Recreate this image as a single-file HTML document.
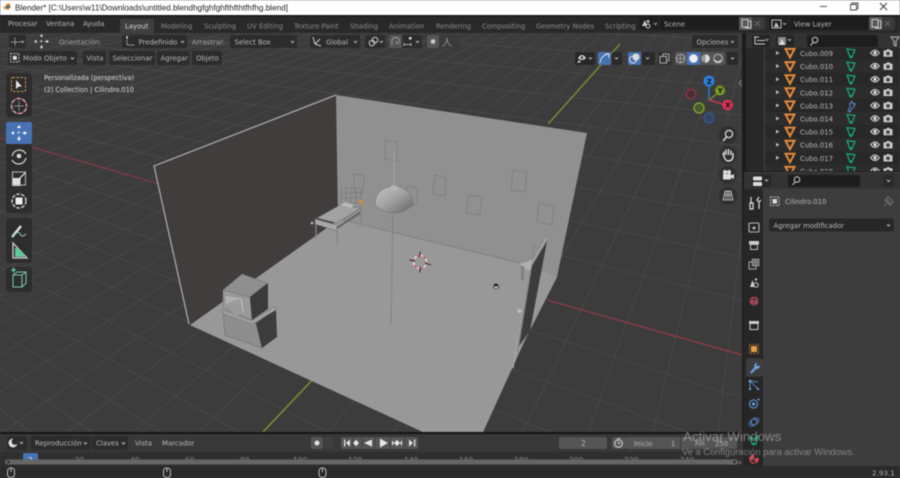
<!DOCTYPE html>
<html><head><meta charset="utf-8"><style>
html,body{margin:0;padding:0;background:#3d3d3d;width:900px;height:478px;overflow:hidden}
#root{position:absolute;left:0;top:0;width:900px;height:478px;overflow:hidden;contain:paint}
svg{display:block;filter:blur(.55px)}
text{font-family:"DejaVu Sans","Liberation Sans",sans-serif;font-size:6.9px;fill:#b8b8b8}
.t{fill:#8a8a8a}
.w{font-family:"Liberation Sans",sans-serif}
</style></head><body><div id="root">
<svg width="900" height="478" viewBox="0 0 900 478" xmlns="http://www.w3.org/2000/svg">
<defs>
<clipPath id="vp"><rect x="0" y="33" width="742" height="400"/></clipPath>
<clipPath id="ol"><rect x="746" y="48" width="154" height="123"/></clipPath>
<clipPath id="tabs"><rect x="118" y="18" width="517" height="15"/></clipPath>
<clipPath id="scrub"><rect x="0" y="451" width="742" height="10"/></clipPath>
<linearGradient id="dome" x1="0" y1="0" x2="1" y2="1"><stop offset="0" stop-color="#c4c4c4"/><stop offset=".5" stop-color="#a0a0a0"/><stop offset="1" stop-color="#626262"/></linearGradient>
<symbol id="tri" viewBox="0 0 12 12" overflow="visible"><path d="M1.5 2H10.5L6 10.5Z" fill="none" stroke="#e48a3a" stroke-width="2"/></symbol>
<symbol id="gm" viewBox="0 0 12 12" overflow="visible"><path d="M2 2L10 3L7 10L5 10Z" fill="none" stroke="#17a67a" stroke-width="1.3"/><circle cx="6" cy="10" r="1.4" fill="#17a67a"/></symbol>
<symbol id="eye" viewBox="0 0 10 8" overflow="visible"><path d="M.7 4Q5-1.5 9.3 4Q5 9.5 .7 4Z" fill="none" stroke="#ddd" stroke-width="1"/><circle cx="5" cy="4" r="1.7" fill="#ddd"/></symbol>
<symbol id="cam" viewBox="0 0 10 8" overflow="visible"><path d="M.5 1.5H3L4 .3H6.5L7.5 1.5H9.5V7.7H.5Z" fill="#ccc"/><circle cx="5" cy="4.5" r="1.9" fill="#444"/></symbol>
</defs>

<!-- title bar -->
<rect width="900" height="15" fill="#fff"/>
<path d="M3 8L6 5L8 3L10 4L11 7L8 10L5 9Z" fill="#e8872b"/><circle cx="8" cy="7" r="1.6" fill="#2c6fb0"/>
<text class="w" x="15" y="10.5" style="font-size:8.6px;fill:#222" textLength="273" lengthAdjust="spacingAndGlyphs">Blender* [C:\Users\w11\Downloads\untitled.blendhgfghfghfthfthtfhfhg.blend]</text>
<path d="M820 6.5H827" stroke="#555" stroke-width="1"/>
<path d="M850.5 4.5H856.5V10H850.5ZM852 4.5V3H858V8.5H856.5" fill="none" stroke="#444" stroke-width=".9"/>
<path d="M880 3L887 10M887 3L880 10" stroke="#333" stroke-width=".9"/>

<!-- top bar -->
<rect y="15" width="900" height="18" fill="#292929"/>
<rect y="15" width="900" height="1.500" fill="#161616"/>
<text x="8" y="26">Procesar</text><text x="46" y="26">Ventana</text><text x="83" y="26">Ayuda</text>
<rect x="120" y="19" width="34" height="14" rx="1.500" fill="#3f3f3f"/>
<g clip-path="url(#tabs)">
<text x="125" y="28.500" style="fill:#d8d8d8">Layout</text>
<text class="t" x="161" y="28.500">Modeling</text>
<text class="t" x="204" y="28.500">Sculpting</text>
<text class="t" x="247" y="28.500">UV Editing</text>
<text class="t" x="294" y="28.500">Texture Paint</text>
<text class="t" x="350" y="28.500">Shading</text>
<text class="t" x="389" y="28.500">Animation</text>
<text class="t" x="436" y="28.500">Rendering</text>
<text class="t" x="482" y="28.500">Compositing</text>
<text class="t" x="536" y="28.500">Geometry Nodes</text>
<text class="t" x="605" y="28.500">Scripting</text>
</g>
<rect x="639" y="17" width="20" height="13" rx="2" fill="#1f1f1f"/>
<path d="M642 26L645 20L647 26ZM648 20a1.400 1.400 0 1 0 .1 0" fill="#ccc"/><circle cx="648" cy="26" r="2" fill="none" stroke="#ccc"/>
<path d="M654 23l1.500 1.500L657 23" fill="none" stroke="#aaa"/>
<rect x="660" y="17" width="79" height="13" fill="#1d1d1d"/>
<text x="664" y="26.500">Scene</text>
<rect x="739" y="17" width="26" height="13" rx="2" fill="#3a3a3a"/>
<rect x="739" y="17" width="13" height="13" fill="#585858"/>
<path d="M742 19.500H748V27H742ZM749 21H751V28H745" fill="none" stroke="#ccc" stroke-width="1"/>
<path d="M755 21L760 26M760 21L755 26" stroke="#6a6a6a"/>
<rect x="769" y="17" width="20" height="13" rx="2" fill="#1f1f1f"/>
<rect x="772" y="20" width="9" height="8" fill="none" stroke="#bbb"/><path d="M774 27L776 22L779 27Z" fill="#ccc"/>
<path d="M783 23l1.500 1.500L786 23" fill="none" stroke="#aaa"/>
<rect x="790" y="17" width="79" height="13" fill="#1d1d1d"/>
<text x="794" y="26.500">View Layer</text>
<rect x="869" y="17" width="26" height="13" rx="2" fill="#3a3a3a"/>
<rect x="869" y="17" width="13" height="13" fill="#585858"/>
<path d="M872 19.500H878V27H872ZM879 21H881V28H875" fill="none" stroke="#ccc" stroke-width="1"/>
<path d="M885 21L890 26M890 21L885 26" stroke="#6a6a6a"/>

<!-- viewport -->
<rect x="0" y="33" width="742" height="400" fill="#3c3c3c"/>
<g clip-path="url(#vp)">
<path stroke="#4a4a4a" stroke-width=".8" fill="none" d="M-578-24L742 20M-578-24L742 40M-578-24L742 62M-578-24L742 87M-578-24L742 115M-578-24L742 146M-578-24L742 180M-578-24L742 217M-578-24L742 257M-578-24L742 300M-578-24L742 398M-578-24L687 432M-578-24L549 432M-578-24L432 432M-578-24L329 432M-578-24L240 432M-578-24L162 432M-578-24L92 432M-578-24L31 432M-578-24L-23 432M-578-24L-74 432M-578-24L-120 432M-578-24L-161 432"/>
<path stroke="#4a4a4a" stroke-width=".8" fill="none" d="M784-120L718 432M784-120L653 432M784-120L588 432M784-120L523 432M784-120L458 432M784-120L393 432M784-120L328 432M784-120L198 432M784-120L133 432M784-120L68 432M784-120L3 432M784-120L-62 432M784-120L-127 432M784-120L-192 432M784-120L-257 432M784-120L-322 432M784-120L-387 432M784-120L-452 432M784-120L-517 432M784-120L-582 432M784-120L-647 432M784-120L-712 432M784-120L-777 432M784-120L-842 432M784-120L-907 432M784-120L-972 432M784-120L-1037 432M784-120L-1102 432M784-120L-1167 432M784-120L-1232 432M784-120L-1362 432M784-120L-1492 432M784-120L-1622 432M784-120L-1752 432M784-120L-1882 432M784-120L-2012 432"/>
<path d="M0 138L160 184" stroke="#8a3a48" stroke-width="1.100"/>
<path d="M547 300L742 355" stroke="#a03a4a" stroke-width="1.100"/>
<path d="M263 432L316 376M548 124L600 66L620 44" stroke="#7c9e32" stroke-width="1.300"/>

<!-- room -->
<polygon points="336,95 587,133 557,277 525,340 483,432 423,432 190,325 337,218" fill="#909090"/>
<polygon points="337,218 520,263 557,277 525,340 483,432 423,432 190,325" fill="#989898"/>
<polygon points="155,167 336,96 338,220 190,325" fill="#413d3d"/>
<path d="M189 324L154 166L336 95" fill="none" stroke="#a8a8a8" stroke-width="1.300"/>
<path d="M338 219L520 263" stroke="#7c7c7c" stroke-width=".8"/>
<g fill="none" stroke="#7a7a7a" stroke-width=".7">
<polygon points="513,170 527,172 525,192 511,190"/>
<polygon points="468,195 482,197 480,215 467,213"/>
<polygon points="539,203 554,206 552,225 537,222"/>
<polygon points="435,175 446,178 445,196 433,194"/>
<polygon points="385,140 397,142 397,161 385,159"/>
<polygon points="354,174 364,175 363,193 354,192"/>
<polygon points="407,186 418,188 416,205 406,203"/>
</g>
<!-- door -->
<path d="M534 247L541 248L540 262L533 262Z" fill="none" stroke="#7e7e7e" stroke-width=".7"/>
<polygon points="547,241 532,266 519,346 530,331" fill="#3c3c3c"/>
<path d="M547 238L531 264L513 368" fill="none" stroke="#a6a6a6" stroke-width="1.300"/>
<path d="M530 270L517 352" stroke="#777" stroke-width=".7"/>
<polygon points="520,264 532,260 529,271" fill="#b0b0b0"/>
<rect x="521" y="266" width="3" height="14" fill="#828282"/>
<circle cx="519.500" cy="311" r="2" fill="#bebebe"/>
<!-- lamp -->
<path d="M393 213L391 325" stroke="#7c7c7c" stroke-width=".8"/>
<path d="M394 153V186" stroke="#a0a0a0" stroke-width="1.400"/>
<path d="M375 205Q375 188 394 186Q413 188 413 205Q394 221 375 205Z" fill="url(#dome)" stroke="#6e6e6e" stroke-width=".5"/>
<ellipse cx="394" cy="188" rx="4" ry="2.600" fill="#b5b5b5"/>
<!-- bed -->
<g stroke="#767676" stroke-width=".6" fill="none"><path d="M341 188H361V203H341ZM346 188V203M351 188V203M356 188V203M341 193H361M341 198H361"/></g>
<polygon points="317,218 340,205 361,208 337,223" fill="#a2a2a2" stroke="#6a6a6a" stroke-width=".6"/>
<polygon points="340,205 345,202 354,205 351,208" fill="#b8b8b8"/>
<polygon points="315,219 337,225 337,231 315,224" fill="#a8a8a8" stroke="#6c6c6c" stroke-width=".6"/>
<path d="M337 228L361 212" stroke="#5e5e5e" stroke-width="1.800"/>
<path d="M316 223V239M337 231V246M361 205V227" stroke="#858585" stroke-width="1.300"/>
<circle cx="312" cy="223" r="1.300" fill="#bbb"/>
<rect x="359.500" y="200.500" width="3" height="3" fill="#f08a1a"/>
<!-- furniture -->
<polygon points="223,312 256,323 262,348 225,335" fill="#8e8e8e" stroke="#6d6d6d" stroke-width=".6"/>
<polygon points="256,323 276,309 277,337 262,348" fill="#3d3b3b"/>
<polygon points="222,310 252,321 275,307 276,310 252,324 222,313" fill="#a4a4a4" stroke="#6d6d6d" stroke-width=".5"/>
<polygon points="223,290 250,297 252,320 223,308" fill="#9a9a9a" stroke="#6d6d6d" stroke-width=".5"/>
<polygon points="223,290 242,274 267,283 250,297" fill="#8f8f8f" stroke="#6d6d6d" stroke-width=".5"/>
<polygon points="250,297 268,283 268,309 252,320" fill="#3b3939"/>
<polygon points="225,295 243,298 245,314 235,316 225,304" fill="#b0b0b0" stroke="#7d7d7d" stroke-width=".5"/>
<polygon points="225,304 240,299 243,314 235,316" fill="#9a9a9a"/>
<!-- 3d cursor -->
<circle cx="420" cy="262" r="6.500" fill="none" stroke="#e8e8e8" stroke-width="1.300"/>
<circle cx="420" cy="262" r="6.500" fill="none" stroke="#d2404a" stroke-width="1.300" stroke-dasharray="3 3.800"/>
<path d="M420 251.500V257M420 267V272.500M409.500 260L415 261M425 263L431 265" stroke="#222" stroke-width=".9"/>
<!-- origin -->
<path d="M493.500 288Q493 283.500 496 283.500Q499 284 499 288Z" fill="#222"/><rect x="494" y="286" width="4.500" height="2.500" fill="#bbb" stroke="#222" stroke-width=".5"/>
</g>

<!-- tool settings row -->
<rect x="9" y="35" width="17" height="13" rx="2" fill="#2c2c2c"/>
<path d="M11 42H20M15 38V46" stroke="#ccc" stroke-width="1" stroke-dasharray="1.500 1"/>
<path d="M21 41l1.500 1.500L24 41" fill="none" stroke="#bbb"/>
<path d="M41.500 35V48M35 41.500H48" stroke="#ccc" stroke-width="1" stroke-dasharray="2 3"/><path d="M41.500 34L39.800 36.500H43.200ZM41.500 49L39.800 46.500H43.200ZM34 41.500L36.500 39.800V43.200ZM49 41.500L46.500 39.800V43.200Z" fill="#ddd"/>
<text x="59" y="44.500" style="fill:#a5a5a5">Orientación:</text>
<rect x="122" y="35" width="65" height="13" rx="2" fill="#2c2c2c"/>
<path d="M127 38V45H134" fill="none" stroke="#ccc" stroke-dasharray="1.500 1"/><circle cx="127" cy="37" r="1" fill="#ddd"/>
<text x="138.500" y="44.500">Predefinido</text>
<path d="M181 41l1.500 1.500L184 41" fill="none" stroke="#bbb"/>
<text x="192" y="44.500" style="fill:#a5a5a5">Arrastrar:</text>
<rect x="230" y="35" width="67" height="13" rx="2" fill="#2c2c2c"/>
<text x="234.500" y="44.500">Select Box</text>
<path d="M291 41l1.500 1.500L294 41" fill="none" stroke="#bbb"/>
<rect x="310" y="35" width="50" height="13" rx="2" fill="#2c2c2c"/>
<path d="M313 37L315 44L321 46M315 44L320 39" fill="none" stroke="#ccc"/>
<text x="326" y="44.500">Global</text>
<path d="M354 41l1.500 1.500L357 41" fill="none" stroke="#bbb"/>
<rect x="365" y="35" width="20" height="13" rx="2" fill="#2c2c2c"/>
<circle cx="372" cy="43" r="2.800" fill="none" stroke="#ccc"/><circle cx="375" cy="40" r="2.800" fill="none" stroke="#ccc"/>
<path d="M380 41l1.500 1.500L383 41" fill="none" stroke="#bbb"/>
<rect x="389" y="35" width="13" height="13" rx="2" fill="#555"/>
<rect x="402" y="35" width="20" height="13" rx="2" fill="#2c2c2c"/>
<path d="M392 45Q391 37 396 37.500Q400 38 399 42Q397 46 396 41" fill="none" stroke="#999"/>
<path d="M404 43V46M411 43V46M404 44.500H411" stroke="#ccc" stroke-width=".8"/><rect x="409" y="37" width="2.500" height="2.500" fill="#ddd"/>
<path d="M416 41l1.500 1.500L419 41" fill="none" stroke="#bbb"/>
<rect x="427" y="35" width="12" height="13" rx="2" fill="#555"/><circle cx="433" cy="41.500" r="2.500" fill="#ccc" stroke="#777"/>
<rect x="439" y="35" width="21" height="13" rx="2" fill="#3a3a3a"/>
<path d="M442 46Q446 46 447 38Q448 46 452 46" fill="none" stroke="#888"/>
<rect x="692" y="35" width="46" height="13" rx="2" fill="#2c2c2c"/>
<text x="696.500" y="44.500">Opciones</text>
<path d="M731 41l1.500 1.500L734 41" fill="none" stroke="#bbb"/>

<!-- header row -->
<rect x="8" y="51" width="69" height="14" rx="2" fill="#2c2c2c"/>
<rect x="10.500" y="53.500" width="8.500" height="8.500" fill="none" stroke="#bbb" stroke-dasharray="2 1"/><rect x="12.800" y="55.800" width="4" height="4" fill="#ddd"/>
<text x="23" y="60.500">Modo Objeto</text>
<path d="M71 57.500l1.500 1.500L74 57.500" fill="none" stroke="#bbb"/>
<rect x="83" y="51" width="23" height="14" rx="2" fill="#2c2c2c"/><text x="86.500" y="60.500">Vista</text>
<rect x="109" y="51" width="46" height="14" rx="2" fill="#2c2c2c"/><text x="112.500" y="60.500">Seleccionar</text>
<rect x="157" y="51" width="32" height="14" rx="2" fill="#2c2c2c"/><text x="160.500" y="60.500">Agregar</text>
<rect x="192" y="51" width="30" height="14" rx="2" fill="#2c2c2c"/><text x="196" y="60.500">Objeto</text>
<rect x="575" y="52" width="20" height="13" rx="2" fill="#272727"/>
<path d="M578 58Q582 52 586 58Q582 62 578 58Z" fill="#ddd"/><circle cx="582" cy="57.500" r="1.300" fill="#333"/><path d="M577 63L579 60L581 62Z" fill="#ddd"/>
<path d="M589 57.500l1.500 1.500L592 57.500" fill="none" stroke="#bbb"/>
<rect x="598" y="52" width="13" height="13" rx="1.500" fill="#4772b3"/>
<path d="M600 63Q601 55 609 54M605 54H609V58" fill="none" stroke="#ddd"/>
<rect x="612" y="52" width="10" height="13" rx="1.500" fill="#2a2a2a"/><path d="M615 57.500l1.500 1.500L618 57.500" fill="none" stroke="#bbb"/>
<rect x="628" y="52" width="13" height="13" rx="1.500" fill="#4772b3"/>
<circle cx="633" cy="59.500" r="3.500" fill="none" stroke="#ddd"/><circle cx="636" cy="57" r="3.500" fill="#ddd"/>
<rect x="642" y="52" width="13" height="13" rx="1.500" fill="#2a2a2a"/><path d="M646 57.500l1.500 1.500L649 57.500" fill="none" stroke="#bbb"/>
<rect x="658" y="52" width="13" height="13" rx="1.500" fill="#303030"/>
<path d="M660 56.500H666.500V63H660ZM663 56V54H669V60.500H667" fill="none" stroke="#aaa"/>
<rect x="675" y="52" width="50" height="13" rx="2" fill="#555"/>
<rect x="687" y="52" width="13" height="13" fill="#4772b3"/>
<circle cx="680.500" cy="58.500" r="4.300" fill="none" stroke="#aaa"/><path d="M676.500 58.500H684.500M680.500 54.500V62.500" stroke="#aaa" stroke-width=".7"/>
<circle cx="693.500" cy="58.500" r="4.300" fill="#eee"/>
<circle cx="705.500" cy="58.500" r="4.300" fill="#999"/><path d="M705.500 54.200A4.300 4.300 0 0 1 705.500 62.800Z" fill="#ddd"/>
<circle cx="718" cy="58.500" r="4.300" fill="none" stroke="#bbb"/><path d="M715 60A3.500 3.500 0 0 0 721 60" stroke="#ddd" fill="none"/>
<rect x="727" y="52" width="11" height="13" rx="1.500" fill="#2a2a2a"/><path d="M731 57.500l1.500 1.500L734 57.500" fill="none" stroke="#bbb"/>

<!-- toolbar -->
<rect x="6" y="73" width="26" height="44" rx="3" fill="#2d2d2d"/>
<rect x="6" y="122" width="26" height="22" rx="2" fill="#4772b3"/>
<rect x="6" y="144" width="26" height="69" rx="2" fill="#2d2d2d"/>
<rect x="6" y="218" width="26" height="45" rx="3" fill="#2d2d2d"/>
<rect x="6" y="267" width="26" height="25" rx="3" fill="#2d2d2d"/>
<rect x="11.500" y="77.500" width="14" height="14" rx="1" fill="none" stroke="#d19a4a" stroke-dasharray="2.500 1.500"/>
<path d="M16 80V89L19 86.500H22Z" fill="#e8e8e8"/>
<circle cx="19" cy="106" r="7.500" fill="none" stroke="#cfcfcf" stroke-width="1.300"/><circle cx="19" cy="106" r="7.500" fill="none" stroke="#c04050" stroke-width="1.300" stroke-dasharray="3 3"/><path d="M19 101V111M14 106H24" stroke="#888"/>
<path d="M19 126V140M12 133H26" stroke="#e8e8e8" stroke-dasharray="2 3"/><path d="M19 125L17 128H21ZM19 141L17 138H21ZM11 133L14 131V135ZM27 133L24 131V135Z" fill="#fff"/>
<path d="M12 156A7.500 7.500 0 0 1 26 154M26 158A7.500 7.500 0 0 1 12 160" fill="none" stroke="#d8d8d8" stroke-width="1.200"/><circle cx="19" cy="156" r="2.300" fill="#ddd"/>
<rect x="12.500" y="178" width="8" height="8" fill="#ddd"/><rect x="12.500" y="172" width="13" height="13" fill="none" stroke="#bbb"/><path d="M19 179L25 173" stroke="#fff"/>
<circle cx="19" cy="201" r="7" fill="none" stroke="#ddd" stroke-width="1.300" stroke-dasharray="3.500 1.500"/><rect x="15.500" y="197.500" width="7" height="7" fill="#eee"/>
<path d="M12 237L21 226" stroke="#e0e0e0" stroke-width="2.500"/><path d="M12 236Q19 230 20 234Q22 238 26 234" fill="none" stroke="#8fd5b0" stroke-width=".9"/>
<path d="M13 243V258H27L13 243Z" fill="none" stroke="#ccc" stroke-width="1.300"/><path d="M15 248A9 9 0 0 1 24 257H15Z" fill="#5fc79a"/>
<path d="M13 275L17 272H26V283L22 287H13ZM13 275H22V287M22 275L26 272" fill="none" stroke="#7fc8ac"/><path d="M11 270H16M13.500 267.500V272.500" stroke="#5fd6a5" stroke-width="1.200"/>

<!-- viewport text -->
<text x="44" y="80" style="fill:#dcdcdc" textLength="90" lengthAdjust="spacingAndGlyphs">Personalizada (perspectiva)</text>
<text x="44" y="92" style="fill:#dcdcdc" textLength="90" lengthAdjust="spacingAndGlyphs">(2) Collection | Cilindro.010</text>

<!-- gizmo -->
<path d="M709 100V86" stroke="#2a80e0" stroke-width="1.200"/><path d="M709 100L718 93" stroke="#7a9a20" stroke-width="1.200"/><path d="M709 100L722 104" stroke="#e03050" stroke-width="1.200"/>
<circle cx="691" cy="94" r="4.800" fill="#4a3036" stroke="#a03448" stroke-width="1"/>
<circle cx="699" cy="108" r="5" fill="#4c5a30" stroke="#82a82a" stroke-width="1.200"/>
<circle cx="709" cy="118" r="5" fill="#35455e" stroke="#2f629f" stroke-width="1"/>
<circle cx="709" cy="81" r="5.500" fill="#2a80e0"/><text x="706.800" y="84" style="fill:#111;font-weight:bold;font-size:7px">Z</text>
<circle cx="720" cy="90.500" r="5" fill="#789a20"/><text x="717.800" y="93" style="fill:#111;font-weight:bold;font-size:7px">Y</text>
<circle cx="727.500" cy="105" r="5.300" fill="#e03050"/><text x="725.200" y="107.500" style="fill:#111;font-weight:bold;font-size:7px">X</text>
<path d="M742 80L739 83L742 86" fill="none" stroke="#888"/>
<circle cx="728" cy="135" r="9" fill="#2f2f2f"/>
<circle cx="729" cy="134" r="3.600" fill="none" stroke="#ddd" stroke-width="1.200"/><path d="M726.500 137L723 141" stroke="#ddd" stroke-width="1.500"/>
<circle cx="728" cy="155" r="9" fill="#2f2f2f"/>
<path d="M724 155V151.500M726 155V149.500M728.500 155V149M731 155V150.500M733 157V153M724 155L723 153.500Q725 161 728 161Q733 161 733 156" fill="none" stroke="#e0e0e0" stroke-width="1.400"/>
<circle cx="728" cy="175" r="9" fill="#2f2f2f"/>
<rect x="723" y="174" width="8" height="5.500" fill="#ddd"/><circle cx="725" cy="172" r="2" fill="#ddd"/><circle cx="729" cy="172" r="2" fill="#ddd"/><path d="M731 175.500L734 174V179L731 177.500Z" fill="#ddd"/>
<circle cx="728" cy="196" r="9" fill="#2f2f2f"/>
<path d="M725 191H731L733 200H723ZM724 195H732M728 191V200M726.500 191L725.500 200M729.500 191L730.500 200" fill="none" stroke="#ccc" stroke-width=".8"/>

<!-- separators -->
<rect x="742" y="33" width="4" height="433" fill="#1c1c1c"/>
<rect y="432" width="746" height="2" fill="#151515"/>

<!-- outliner -->
<rect x="746" y="33" width="154" height="139" fill="#282828"/>
<rect x="746" y="33" width="154" height="15" fill="#333"/>
<rect x="752" y="35" width="18" height="12" rx="2" fill="#252525"/>
<path d="M754 37H759M757 40.500H765M757 44H765M755 37V44H757" fill="none" stroke="#ccc"/>
<path d="M765.500 39l1.500 1.500L768.500 39" fill="none" stroke="#aaa"/>
<rect x="776" y="35" width="18" height="12" rx="2" fill="#252525"/>
<rect x="778" y="37" width="8" height="8" fill="#888"/><path d="M779 45L782 39L785 45Z" fill="#ddd"/>
<path d="M788 39l1.500 1.500L791 39" fill="none" stroke="#aaa"/>
<rect x="807" y="35" width="71" height="12" rx="2" fill="#1d1d1d"/>
<circle cx="815" cy="40" r="2.800" fill="none" stroke="#ccc"/><path d="M813 42.500L810.500 45.500" stroke="#ccc"/>
<path d="M891 37H899L896 41V46L894 45V41Z" fill="none" stroke="#bbb"/>
<g clip-path="url(#ol)">
<rect x="765" y="59.500" width="135" height="13.100" fill="#2c2c2c"/>
<rect x="765" y="85.700" width="135" height="13.100" fill="#2c2c2c"/>
<rect x="765" y="111.900" width="135" height="13.100" fill="#2c2c2c"/>
<rect x="765" y="138.100" width="135" height="13.100" fill="#2c2c2c"/>
<rect x="765" y="164.300" width="135" height="13.100" fill="#2c2c2c"/>
<rect x="764" y="48" width="1" height="125" fill="#444"/>
<g fill="#bbb">
<path d="M776 51V55L779.500 53Z"/><path d="M776 64.100V68.100L779.500 66.100Z"/><path d="M776 77.200V81.200L779.500 79.200Z"/><path d="M776 90.300V94.300L779.500 92.300Z"/><path d="M776 103.400V107.400L779.500 105.400Z"/><path d="M776 116.500V120.500L779.500 118.500Z"/><path d="M776 129.600V133.600L779.500 131.600Z"/><path d="M776 142.700V146.700L779.500 144.700Z"/><path d="M776 155.800V159.800L779.500 157.800Z"/>
</g>
<use href="#tri" x="784" y="47" width="12" height="12"/><use href="#tri" x="784" y="60.100" width="12" height="12"/><use href="#tri" x="784" y="73.200" width="12" height="12"/><use href="#tri" x="784" y="86.300" width="12" height="12"/><use href="#tri" x="784" y="99.400" width="12" height="12"/><use href="#tri" x="784" y="112.500" width="12" height="12"/><use href="#tri" x="784" y="125.600" width="12" height="12"/><use href="#tri" x="784" y="138.700" width="12" height="12"/><use href="#tri" x="784" y="151.800" width="12" height="12"/><use href="#tri" x="784" y="164.900" width="12" height="12"/>
<text x="800" y="56">Cubo.009</text><text x="800" y="69.100">Cubo.010</text><text x="800" y="82.200">Cubo.011</text><text x="800" y="95.300">Cubo.012</text><text x="800" y="108.400">Cubo.013</text><text x="800" y="121.500">Cubo.014</text><text x="800" y="134.600">Cubo.015</text><text x="800" y="147.700">Cubo.016</text><text x="800" y="160.800">Cubo.017</text><text x="800" y="173.900">Cubo.018</text>
<use href="#gm" x="845" y="47" width="12" height="12"/><use href="#gm" x="845" y="60.100" width="12" height="12"/><use href="#gm" x="845" y="73.200" width="12" height="12"/><use href="#gm" x="845" y="86.300" width="12" height="12"/>
<path d="M848 111L850 107Q849 103 852 101.500L853 104L855 103.500Q855 107 852 108L850 112Z" fill="none" stroke="#5a8fd8"/>
<use href="#gm" x="845" y="112.500" width="12" height="12"/><use href="#gm" x="845" y="125.600" width="12" height="12"/><use href="#gm" x="845" y="138.700" width="12" height="12"/><use href="#gm" x="845" y="151.800" width="12" height="12"/><use href="#gm" x="845" y="164.900" width="12" height="12"/>
<use href="#eye" x="870" y="49" width="10" height="8"/><use href="#eye" x="870" y="62.100" width="10" height="8"/><use href="#eye" x="870" y="75.200" width="10" height="8"/><use href="#eye" x="870" y="88.300" width="10" height="8"/><use href="#eye" x="870" y="101.400" width="10" height="8"/><use href="#eye" x="870" y="114.500" width="10" height="8"/><use href="#eye" x="870" y="127.600" width="10" height="8"/><use href="#eye" x="870" y="140.700" width="10" height="8"/><use href="#eye" x="870" y="153.800" width="10" height="8"/><use href="#eye" x="870" y="166.900" width="10" height="8"/>
<use href="#cam" x="883" y="49" width="10" height="8"/><use href="#cam" x="883" y="62.100" width="10" height="8"/><use href="#cam" x="883" y="75.200" width="10" height="8"/><use href="#cam" x="883" y="88.300" width="10" height="8"/><use href="#cam" x="883" y="101.400" width="10" height="8"/><use href="#cam" x="883" y="114.500" width="10" height="8"/><use href="#cam" x="883" y="127.600" width="10" height="8"/><use href="#cam" x="883" y="140.700" width="10" height="8"/><use href="#cam" x="883" y="153.800" width="10" height="8"/><use href="#cam" x="883" y="166.900" width="10" height="8"/>
</g>

<!-- properties -->
<rect x="746" y="171" width="154" height="2" fill="#1c1c1c"/>
<rect x="744" y="172" width="156" height="295" fill="#3d3d3d"/>
<rect x="744" y="173" width="156" height="16" fill="#333"/>
<rect x="743" y="189" width="20" height="277" fill="#262626"/>
<rect x="752" y="175" width="19" height="12" rx="2" fill="#282828"/>
<rect x="753" y="176.500" width="9" height="4" rx="1" fill="#ddd"/><rect x="753" y="182" width="9" height="4" rx="1" fill="#ddd"/>
<path d="M765 179.500l1.500 1.500L768 179.500" fill="none" stroke="#bbb"/>
<rect x="788" y="175" width="72" height="12" rx="2" fill="#1d1d1d"/>
<circle cx="797" cy="179.500" r="2.800" fill="none" stroke="#ccc"/><path d="M795 182L792.500 185" stroke="#ccc"/>
<rect x="883" y="175" width="11" height="12" rx="2" fill="#2a2a2a"/><path d="M887 180l1.500 1.500L890 180" fill="none" stroke="#bbb"/>
<path d="M751 197V203M750 203H753V209H750ZM759 197L757 200L759 202V209M759 202L761 200" fill="none" stroke="#ddd" stroke-width="1.200"/>
<rect x="770.500" y="197" width="8.500" height="8.500" fill="none" stroke="#bbb" stroke-dasharray="2 1"/><rect x="772.500" y="199" width="4.500" height="4.500" fill="#ddd"/>
<text x="785" y="204">Cilindro.010</text>
<path d="M884 206L887 203M886 199L891 204M888 197L893 202L890 205L885 200Z" fill="none" stroke="#6f6f6f"/>
<rect x="769" y="218.500" width="125" height="13" rx="2.500" fill="#272727"/>
<text x="773.500" y="228">Agregar modificador</text>
<path d="M887 224.500l1.500 1.500L890 224.500" fill="none" stroke="#bbb"/>
<!-- property tabs -->
<rect x="749" y="223" width="10" height="9" rx="1" fill="none" stroke="#bbb" stroke-width="1.100"/><circle cx="754" cy="228" r="1.500" fill="#bbb"/>
<rect x="749" y="241" width="10" height="3.500" fill="#ccc"/><rect x="750.500" y="244.500" width="7" height="5" fill="none" stroke="#bbb"/>
<rect x="749" y="262" width="7" height="7" fill="none" stroke="#aaa"/><rect x="752" y="259" width="7" height="7" fill="#777" stroke="#aaa" stroke-width=".6"/>
<path d="M750 287L752.500 280L755 287Z" fill="#ccc"/><circle cx="756" cy="285" r="2.200" fill="none" stroke="#ccc"/><circle cx="756" cy="279.500" r="1.200" fill="#ccc"/>
<circle cx="754" cy="301" r="4.500" fill="#a84a58"/><path d="M750 301Q754 297 758 301M754 296.500V305.500" stroke="#3a2a2a" stroke-width=".8" fill="none"/>
<rect x="749" y="321" width="10" height="2.500" fill="#ccc"/><rect x="750" y="323.500" width="8" height="6" fill="none" stroke="#ccc"/>
<rect x="749.500" y="344.500" width="9" height="9" fill="none" stroke="#a56a2a" stroke-dasharray="2 1"/><rect x="751" y="346" width="6" height="6" fill="#e69a4a"/>
<rect x="746" y="358.500" width="17" height="18" rx="2" fill="#3d3d3d"/>
<path d="M750 372.500L754.500 367.500Q753.500 363.500 757.500 362.500L756 365.500L758 366.500L760 365Q760 369 756 369L751.500 373.500Z" fill="#71a8ea"/>
<path d="M750 381V389M750 381L758 389M750 381L758 382" fill="none" stroke="#5a86c8"/><circle cx="750" cy="381" r="1.300" fill="#7aa8e8"/><circle cx="750" cy="389" r="1.100" fill="#7aa8e8"/><circle cx="758" cy="389" r="1.100" fill="#7aa8e8"/>
<circle cx="753.500" cy="404" r="4" fill="none" stroke="#5a86c8" stroke-width="1.300"/><circle cx="753.500" cy="404" r="1.500" fill="#7aa8e8"/><circle cx="758.500" cy="399.500" r="1" fill="#7aa8e8"/>
<circle cx="754" cy="422" r="3" fill="none" stroke="#5a86c8" stroke-width="1.300"/><ellipse cx="754" cy="422" rx="5.500" ry="3.200" fill="none" stroke="#4a72b0" transform="rotate(-35 754 422)"/>
<path d="M750 437L754 439L758 436L756 444H752Z" fill="none" stroke="#17a67a" stroke-width="1.200"/><circle cx="754" cy="444" r="1.500" fill="#17a67a"/>
<circle cx="754" cy="459" r="4.800" fill="#d04a58"/><path d="M754 459V454.200A4.800 4.800 0 0 1 758.500 457.500ZM750 461L754 459L756 463.500" fill="#2a2a2a"/>

<!-- timeline -->
<rect y="434" width="743" height="18" fill="#383838"/>
<rect y="452" width="743" height="14" fill="#2f2f2f"/>
<rect x="7" y="436" width="20" height="14" rx="2" fill="#2c2c2c"/>
<circle cx="13" cy="443" r="4.500" fill="#ddd"/><circle cx="15" cy="441.500" r="3.300" fill="#2c2c2c"/><path d="M20 442l1.500 1.500L23 442" fill="none" stroke="#bbb"/>
<rect x="31" y="436" width="60" height="14" rx="2" fill="#2c2c2c"/>
<text x="35" y="445.500">Reproducción</text><path d="M84 442.500l1.500 1.500L87 442.500" fill="none" stroke="#bbb"/>
<rect x="92" y="436" width="36" height="14" rx="2" fill="#2c2c2c"/>
<text x="96" y="445.500">Claves</text><path d="M122 442.500l1.500 1.500L125 442.500" fill="none" stroke="#bbb"/>
<text x="135" y="445.500">Vista</text><text x="162" y="445.500">Marcador</text>
<rect x="311" y="437" width="12" height="12" rx="2" fill="#555"/><circle cx="317" cy="443" r="2.500" fill="#e0e0e0"/>
<rect x="324" y="437" width="10" height="12" rx="2" fill="#3f3f3f"/>
<rect x="341" y="437" width="77" height="12" rx="2" fill="#555"/>
<g fill="#e6e6e6"><path d="M344 439.500H345.300V446.500H344ZM350 439.500V446.500L346 443Z"/><path d="M353 443L356 439.800L359 443L356 446.200Z"/><path d="M364 439.500V446.500L372 443Z" transform="rotate(180 368 443)"/><path d="M380 438.500V447.500L388 443Z"/><path d="M394 443L397 439.800L400 443L397 446.200ZM392 440V446L394 443ZM402 440V446L400 443Z"/><path d="M409 439.500L413 443L409 446.500ZM414 439.500H415.300V446.500H414Z"/></g>
<path d="M353 437V449M362 437V449M375 437V449M390 437V449M405 437V449" stroke="#3c3c3c" stroke-width=".7"/>
<rect x="559" y="437" width="48" height="12" rx="2" fill="#555"/><text x="581" y="446" style="font-size:7.500px">2</text>
<rect x="612" y="437" width="13" height="12" rx="2" fill="#555"/><circle cx="618.500" cy="443.500" r="3.800" fill="none" stroke="#ddd"/><path d="M618.500 441V443.500H620.500M617 438.500H620" fill="none" stroke="#ddd" stroke-width=".8"/>
<rect x="625" y="437" width="112" height="12" rx="2" fill="#555"/>
<rect x="680" y="437" width="1" height="12" fill="#3c3c3c"/>
<text x="634" y="446">Inicio</text><text x="671" y="446">1</text><text x="695" y="446">Fin</text><text x="715" y="446">250</text>
<!-- scrub -->
<g clip-path="url(#scrub)">
<text class="t" x="74.500" y="463" style="font-size:7.500px">20</text><text class="t" x="130" y="463" style="font-size:7.500px">40</text><text class="t" x="185" y="463" style="font-size:7.500px">60</text><text class="t" x="240" y="463" style="font-size:7.500px">80</text><text class="t" x="293" y="463" style="font-size:7.500px">100</text><text class="t" x="348" y="463" style="font-size:7.500px">120</text><text class="t" x="404" y="463" style="font-size:7.500px">140</text><text class="t" x="459" y="463" style="font-size:7.500px">160</text><text class="t" x="514" y="463" style="font-size:7.500px">180</text><text class="t" x="569" y="463" style="font-size:7.500px">200</text><text class="t" x="624" y="463" style="font-size:7.500px">220</text><text class="t" x="680" y="463" style="font-size:7.500px">240</text>
<rect x="23" y="453" width="15" height="10" rx="2" fill="#4772b3"/><text x="28" y="463" style="font-size:7.500px;fill:#eee">2</text>
</g>
<rect x="5" y="459.500" width="733" height="5" rx="2.500" fill="#656565"/>
<circle cx="8.500" cy="462" r="2" fill="#333" stroke="#888" stroke-width=".6"/>
<circle cx="734.500" cy="462" r="2" fill="#333" stroke="#888" stroke-width=".6"/>
<path d="M738 464L741 461M740 464L741.500 462.500" stroke="#888" stroke-width=".6"/>

<!-- status -->
<rect y="466" width="900" height="12" fill="#2a2a2a"/>
<rect x="7.500" y="468" width="7" height="9.500" rx="3" fill="none" stroke="#bbb"/><path d="M11 468V472" stroke="#bbb"/>
<rect x="163.500" y="468" width="7" height="9.500" rx="3" fill="none" stroke="#bbb"/><path d="M167 468V472" stroke="#bbb"/>
<rect x="319" y="468" width="7" height="9.500" rx="3" fill="none" stroke="#bbb"/><path d="M322.500 468V472" stroke="#bbb"/>
<text x="872" y="475.500" style="font-size:7.200px;fill:#aaa">2.93.1</text>

<!-- watermark -->
<text class="w" x="683" y="441" style="font-size:13.300px;fill:rgba(255,255,255,.38)">Activar Windows</text>
<text class="w" x="682" y="455" style="font-size:9.300px;fill:rgba(255,255,255,.36)">Ve a Configuración para activar Windows.</text>
</svg>
</div></body></html>
